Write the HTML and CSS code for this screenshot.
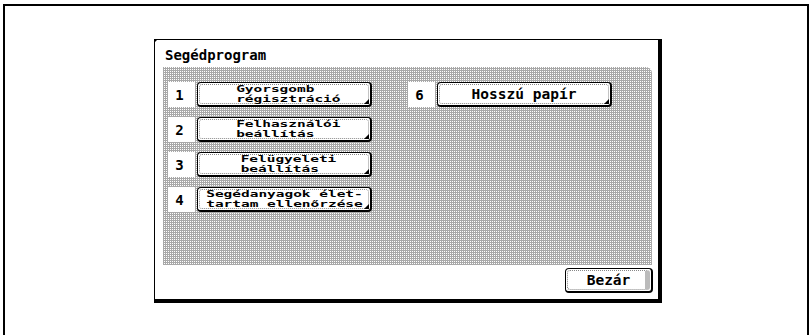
FILE: index.html
```html
<!DOCTYPE html>
<html>
<head>
<meta charset="utf-8">
<link rel="stylesheet" href="styles.css">
</head>
<body>
<div class="frame">
  <div class="dialog">
    <div class="title">Segédprogram</div>
    <div class="panel">
      <div class="col">
        <div class="row"><div class="num">1</div><div class="btn"><span class="two">Gyorsgomb<br>régisztráció</span></div></div>
        <div class="row"><div class="num">2</div><div class="btn"><span class="two">Felhasználói<br>beállítás</span></div></div>
        <div class="row"><div class="num">3</div><div class="btn"><span class="two">Felügyeleti<br>beállítás</span></div></div>
        <div class="row"><div class="num">4</div><div class="btn"><span class="two wide">Segédanyagok élet-<br>tartam ellenőrzése</span></div></div>
      </div>
      <div class="col">
        <div class="row"><div class="num">6</div><div class="btn"><span class="one">Hosszú papír</span></div></div>
      </div>
    </div>
    <div class="footer">
      <div class="close">Bezár</div>
    </div>
  </div>
</div>
</body>
</html>
```

FILE: styles.css
```css
html, body {
  margin: 0;
  padding: 0;
  background: #fff;
  overflow: hidden;
}
body {
  width: 812px;
  height: 335px;
  font-family: "DejaVu Sans Mono", "Liberation Mono", monospace;
  color: #000;
}
.frame {
  margin: 4px 0 0 3px;
  width: 806px;
  height: 340px;
  border: 2px solid #000;
  border-bottom: none;
  padding: 33px 0 0 149px;
  box-sizing: border-box;
}
.dialog {
  position: relative;
  width: 508px;
  height: 264px;
  box-sizing: border-box;
  border-top: 1px solid #000;
  border-left: 1px solid #000;
  border-right: 4px solid #000;
  border-bottom: 4px solid #000;
  padding: 5px 6px 0 8px;
  background: #fff;
}
.dialog::before {
  content: "";
  position: absolute;
  left: -1px;
  top: -1px;
  border-top: 4px solid #000;
  border-right: 4px solid transparent;
}
.title {
  font-size: 14px;
  font-weight: bold;
  height: 22px;
  line-height: 20px;
  padding-left: 2px;
}
.panel {
  height: 198px;
  box-sizing: border-box;
  border-top-right-radius: 6px;
  background-color: #fff;
  background-image:
    repeating-linear-gradient(0deg, #a8a8a8 0 1px, transparent 1px 2px),
    repeating-linear-gradient(90deg, #a8a8a8 0 1px, #fff 1px 2px);
  padding: 15px 0 0 5px;
  display: flex;
  gap: 36px;
}
.col {
  display: flex;
  flex-direction: column;
  gap: 10px;
}
.row {
  display: flex;
  gap: 2px;
  height: 25px;
}
.num {
  width: 27px;
  height: 25px;
  background: #fff;
  font-weight: bold;
  font-size: 14px;
  display: flex;
  align-items: center;
  justify-content: center;
  padding-right: 4px;
  box-sizing: border-box;
}
.btn {
  position: relative;
  width: 175px;
  height: 25px;
  box-sizing: border-box;
  background: #fff;
  border: 1px solid #000;
  border-right-width: 2px;
  border-bottom-width: 2px;
  border-radius: 4px;
  display: flex;
  align-items: center;
  justify-content: center;
  overflow: hidden;
}
.btn::before {
  content: "";
  position: absolute;
  inset: 1px;
  border: 1px dotted #888;
  border-radius: 3px;
}
.btn::after {
  content: "";
  position: absolute;
  right: 1px;
  bottom: 1px;
  width: 0;
  height: 0;
  border-left: 5px solid transparent;
  border-bottom: 5px solid #000;
}
.two {
  display: inline-block;
  font-weight: bold;
  font-size: 9.5px;
  line-height: 10px;
  transform: scaleX(1.52);
  white-space: nowrap;
  margin-left: 8px;
}
.two.wide {
  margin-left: 0;
}
.one {
  font-weight: bold;
  font-size: 14.5px;
}
.footer {
  display: flex;
  justify-content: flex-end;
  padding-top: 3px;
}
.close {
  position: relative;
  width: 88px;
  height: 25px;
  box-sizing: border-box;
  border: 1px solid #000;
  border-right-width: 2px;
  border-bottom-width: 2px;
  border-radius: 4px;
  font-weight: bold;
  font-size: 14.5px;
  display: flex;
  align-items: center;
  justify-content: center;
  margin-right: -1px;
  background: #fff;
}
.close::before {
  content: "";
  position: absolute;
  inset: 1px;
  border: 1px dotted #888;
  border-right: 5px solid #bbb;
  border-radius: 3px;
}
```
